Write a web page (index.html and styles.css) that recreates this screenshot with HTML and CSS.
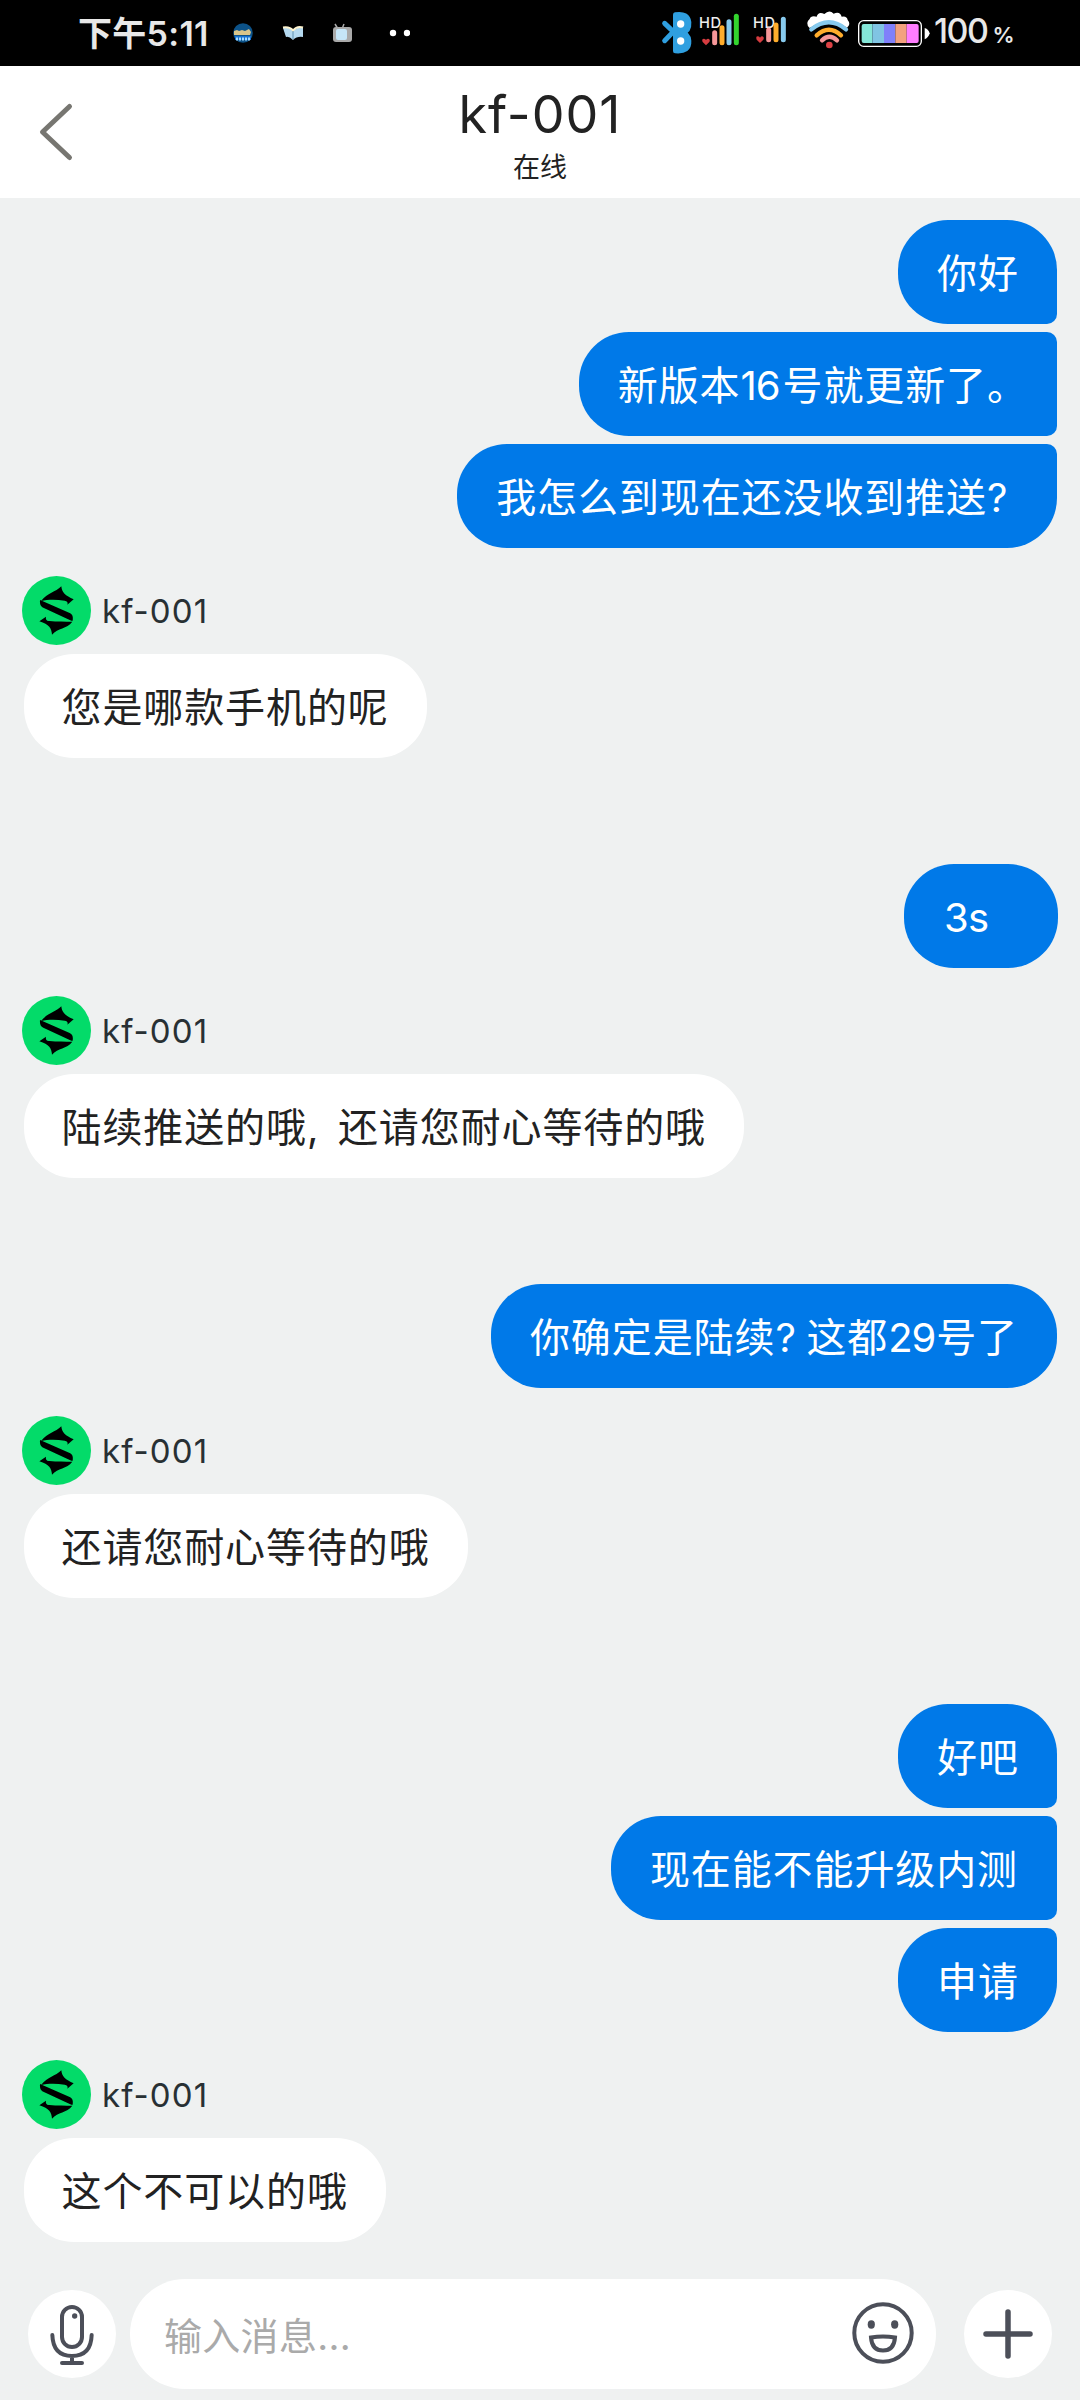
FILE: index.html
```html
<!DOCTYPE html>
<html lang="zh-CN">
<head>
<meta charset="utf-8">
<title>kf-001</title>
<link rel="stylesheet" href="styles.css">
</head>
<body>
<svg width="0" height="0" class="defs">
  <symbol id="logo" viewBox="0 0 207 207">
    <circle cx="103.500" cy="103.500" r="103.500" fill="#03db69"/>
    <path d="M57 75C77 50 100 49 118 31C119 48 130 60 155 70L136 86C139 79 135 75 128 74C103 70 78 70 57 75ZM54 72L143 111C151 115 154 121 152 134H148L64 95C56 91 53 85 54 72ZM52 136L72 122C70 130 74 136 82 135C105 137 130 137 151 137C134 159 108 155 90 176C89 158 82 145 52 136Z" fill="#000"/>
  </symbol>
</svg>
<div class="phone">
  <div class="status">
    <span class="clock">下午5:11</span>
    <svg class="notes" width="180" height="30" viewBox="0 0 180 30">
      <circle cx="13" cy="15" r="9.800" fill="#0c5288"/>
      <path d="M4 13l3-1 2 1 3-1 3 1 4-2 2 3-1 3H4Z" fill="#d9c58a"/>
      <path d="M5 20h16" stroke="#1670d0" stroke-width="4"/>
      <path d="M6 21h14" stroke="#a5dcff" stroke-width="3" stroke-dasharray="2 1"/>
      <path d="M53 10q7-1 10 3q4-5 10-3v9q-6-1-10 3q-4-4-7-3Z" fill="#b5d9ef"/>
      <path d="M53 9.500q7-1 10 3q4-5 10-3" fill="none" stroke="#fff4cf" stroke-width="2"/>
      <path d="M63 13v8" stroke="#5f8fae"/>
      <path d="M108 11l-3-5M112 11l2-5" stroke="#aaa" stroke-width="1.500"/>
      <rect x="103" y="9" width="19" height="15" rx="3" fill="#a9a9a9"/>
      <rect x="106" y="11" width="11" height="11" rx="2" fill="#c6e6f8"/>
      <circle cx="163" cy="15" r="3.200" fill="#fff"/><circle cx="177" cy="15" r="3.200" fill="#fff"/>
    </svg>
    <svg class="signals" width="290" height="66" viewBox="0 0 870 198">
      <path d="M74 70L100 95L74 122" fill="none" stroke="#2f9fe0" stroke-width="15" stroke-linecap="round"/>
      <path d="M106 44V153Q149 157 147 123Q145 101 126 98Q149 94 147 67Q144 38 106 44Z" fill="#2f9fe0" stroke="#2f9fe0" stroke-width="14" stroke-linejoin="round"/>
      <circle cx="122" cy="72" r="11" fill="#fff"/><circle cx="122" cy="123" r="11" fill="#fff"/>
      <text x="177" y="84" class="hd">HD</text><text x="339" y="84" class="hd">HD</text>
      <path id="heart" d="M198 136L188 126Q184 116 192 116Q197 117 198 120Q200 116 205 116Q212 118 208 126Z" fill="#d63c40"/>
      <use href="#heart" x="162" y="-7"/>
      <g stroke-width="15" stroke-linecap="round">
        <path d="M224 98V128M386 90V119" stroke="#f69799"/>
        <path d="M246 83V128M408 75V119" stroke="#ffad2c"/>
        <path d="M267 65V128M430 58V119" stroke="#87caee"/>
        <path d="M289 49V128" stroke="#33d42e"/>
      </g>
      <path d="M509 84Q494 70 509 57Q512 46 530 50Q535 33 553 42Q568 27 581 41Q600 33 605 50Q621 47 623 60Q634 72 621 83Q567 47 509 84Z" fill="#fff"/>
      <g fill="none" stroke-width="13" stroke-linecap="round">
        <path d="M514 88Q567 46 618 88" stroke="#87caee"/>
        <path d="M530 106Q567 73 603 106" stroke="#ffad2c"/>
        <path d="M546 121Q568 100 591 121" stroke="#f69799"/>
      </g>
      <circle cx="568" cy="135" r="10" fill="#dc4144"/>
      <rect x="656" y="62" width="188" height="77" rx="15" fill="none" stroke="#fff" stroke-width="4"/>
      <path d="M671 72H697V129H671Q665 129 665 123V78Q665 72 671 72Z" fill="#84e6d8"/>
      <path d="M697 72H732V129H697Z" fill="#80c4e3"/><path d="M732 72H766V129H732Z" fill="#8080fa"/><path d="M766 72H800V129H766Z" fill="#f3a17e"/>
      <path d="M800 72H830Q836 72 836 78V123Q836 129 830 129H800Z" fill="#ff7dff"/>
      <path d="M854 84Q866 88 869 100Q866 112 854 118Z" fill="#fff"/>
    </svg>
    <span class="battery">100<small>%</small></span>
  </div>
  <header class="header">
    <svg class="back" width="40" height="60" viewBox="0 0 40 60"><path d="M33.500 4.500L6.500 30L33.500 55.500" fill="none" stroke="#777671" stroke-width="5" stroke-linecap="round" stroke-linejoin="round"/></svg>
    <div class="heading"><h1>kf-001</h1><p>在线</p></div>
  </header>
  <main class="chat">
    <section class="sent">
      <div class="bubble first w2">你好</div>
      <div class="bubble middle">新版本<span class="n16">16</span>号就更新了<span class="punct">。</span></div>
      <div class="bubble last">我怎么到现在还没收到推送<span class="punct">?</span></div>
    </section>
    <section class="received">
      <div class="sender"><svg class="avatar"><use href="#logo"/></svg><span>kf-001</span></div>
      <div class="bubble">您是哪款手机的呢</div>
    </section>
    <section class="sent"><div class="bubble w3s">3s</div></section>
    <section class="received">
      <div class="sender"><svg class="avatar"><use href="#logo"/></svg><span>kf-001</span></div>
      <div class="bubble">陆续推送的哦<span class="punct">,</span>还请您耐心等待的哦</div>
    </section>
    <section class="sent"><div class="bubble">你确定是陆续<span class="punct">?</span>这都<span class="n29">29</span>号了</div></section>
    <section class="received">
      <div class="sender"><svg class="avatar"><use href="#logo"/></svg><span>kf-001</span></div>
      <div class="bubble">还请您耐心等待的哦</div>
    </section>
    <section class="sent">
      <div class="bubble first w2">好吧</div>
      <div class="bubble middle">现在能不能升级内测</div>
      <div class="bubble last w2">申请</div>
    </section>
    <section class="received">
      <div class="sender"><svg class="avatar"><use href="#logo"/></svg><span>kf-001</span></div>
      <div class="bubble">这个不可以的哦</div>
    </section>
  </main>
  <footer class="composer">
    <div class="round mic"><svg width="88" height="88" viewBox="-3 0 264 264" fill="none" stroke="#4c4f59" stroke-width="12" stroke-linecap="round"><rect x="99" y="51" width="60" height="120" rx="30"/><path d="M70 135Q72 198 129 198Q186 198 188 135M129 198V219M99 219H159"/><circle cx="137" cy="78" r="8" fill="#4c4f59" stroke="none"/></svg></div>
    <div class="input"><span>输入消息...</span>
      <svg width="62" height="64" viewBox="0 0 62 64" fill="none" stroke="#4c4f59" stroke-width="4"><circle cx="31" cy="31" r="28.700"/><ellipse cx="19.300" cy="22.500" rx="3.600" ry="4.200" fill="#4c4f59" stroke="none"/><ellipse cx="42.700" cy="22.500" rx="3.600" ry="4.200" fill="#4c4f59" stroke="none"/><path d="M19 35.500Q31 33.500 43 35.500Q42 48.500 31 48.500Q20 48.500 19 35.500Z"/></svg>
    </div>
    <div class="round plus"><svg width="88" height="88" viewBox="0 0 88 88"><path d="M44 22V66M22 44H66" stroke="#4c4f59" stroke-width="5.500" stroke-linecap="round"/></svg></div>
  </footer>
</div>
</body>
</html>
```
FILE: styles.css
```css
* { box-sizing: border-box; }
body { margin: 0; background: #eff1f1; font-family: Inter, "Noto Sans CJK SC", sans-serif; color: #222; }
svg { display: block; flex: none; }
.defs { display: none; }
.phone { width: 1080px; height: 2400px; display: flex; flex-direction: column; overflow: hidden; }
.status { height: 66px; background: #000; display: flex; align-items: center; color: #e8e8e8; white-space: nowrap; }
.clock { margin-left: 78px; width: 152px; font-size: 34px; font-weight: 600; line-height: 62px; letter-spacing: .3px; padding-top: 2px; }
.notes { margin-right: 230px; }
.hd { font: 500 44px Inter, sans-serif; fill: #eee; letter-spacing: 2px; }
.battery { margin-left: 4px; font-size: 34px; font-weight: 500; line-height: 66px; letter-spacing: -1.5px; }
.battery small { font-size: 22px; font-weight: 600; margin-left: 5px; }
.header { height: 132px; background: #fff; display: flex; align-items: center; }
.back { margin-left: 36px; }
.heading { flex: 1; margin-right: 76px; padding-top: 3px; text-align: center; }
h1 { margin: 0; font-size: 52px; line-height: 62px; font-weight: 400; letter-spacing: 1px; }
.heading p { margin: 6px 0 0; font-size: 27px; line-height: 32px; }
.chat { height: 2081px; padding: 22px 22px 0; flex: none; }
.sent { display: flex; flex-direction: column; align-items: flex-end; gap: 8px; }
.received { height: 183px; margin: 28px 0 105px; display: flex; flex-direction: column; align-items: flex-start; gap: 9px; }
.sender { height: 69px; display: flex; align-items: center; gap: 11px; font-size: 33px; letter-spacing: 1.1px; color: #283034; }
.avatar { width: 69px; height: 69px; }
.bubble { height: 104px; padding: 2px 38px 0; border-radius: 50px; font-size: 40px; line-height: 104px; letter-spacing: .9px; white-space: nowrap; }
.sent .bubble { padding: 2px 39px 0; margin-right: 1px; background: #0079e8; color: #fff; }
.received .bubble { background: #fff; margin-left: 1.5px; }
.sent .first { border-bottom-right-radius: 10px; }
.sent .middle { border-top-right-radius: 10px; border-bottom-right-radius: 10px; }
.sent .last { border-top-right-radius: 10px; }
.sent .w2 { width: 159px; }
.sent .w3s { width: 154px; padding-left: 40px; letter-spacing: -.8px; margin-right: 0; }
.punct, .n16, .n29 { display: inline-block; width: 31px; vertical-align: top; }
.n16 { width: 42px; letter-spacing: -1px; }
.n29 { width: 48px; letter-spacing: -1px; }
.composer { flex: 1; display: flex; align-items: flex-start; padding-left: 28px; }
.round { width: 88px; height: 88px; flex: none; margin-top: 11px; border-radius: 50%; background: #fff; }
.input { width: 806px; height: 110px; margin: 0 28px 0 14px; padding: 0 22px 0 34px; border-radius: 55px; background: #fff; display: flex; align-items: center; justify-content: space-between; color: #aaa; font-size: 38px; letter-spacing: .3px; }
.input span { padding-bottom: 2px; }
```
